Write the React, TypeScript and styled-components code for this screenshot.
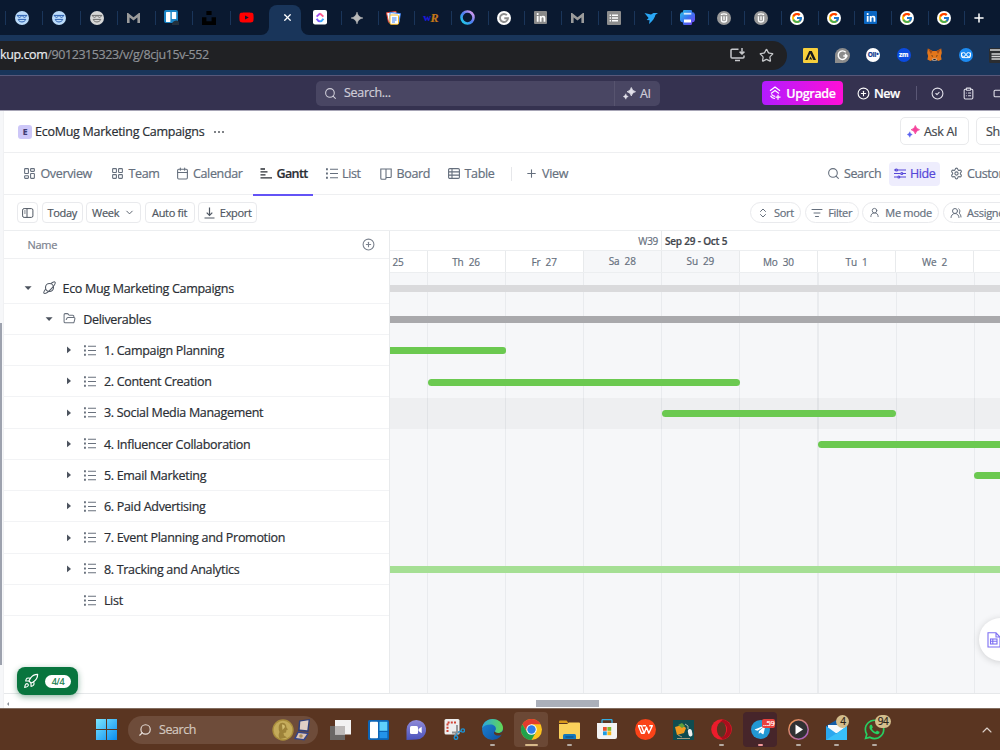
import type { ReactNode } from "react"
import styled, { createGlobalStyle, css } from "styled-components"
import {
    Calendar, ChevronDown, ChevronUp, ChevronsUpDown, CircleCheck, CirclePlus, ClipboardList, FolderOpen,
    LayoutDashboard, LayoutGrid, ListFilter, Plus, Rocket, Search, Settings, Star, Table2, UserRound, UsersRound, Video, X,
} from "lucide-react"
import { FcGoogle } from "react-icons/fc"
import { FaLinkedinIn, FaTelegramPlane, FaWhatsapp, FaYoutube } from "react-icons/fa"

/** Types */

interface GanttRow {
    label: string
    level: number
    kind: 'space' | 'folder' | 'list'
    arrow?: 'down' | 'right'
    color?: string
    start?: number
    end?: number
    hovered?: boolean
}

/** Data */

const DAY = 78.1
const FIRST_LINE = 37.5

const rows: GanttRow[] = [
    { label: 'Eco Mug Marketing Campaigns', level: 0, kind: 'space', arrow: 'down', color: '#dadadc', start: -2, end: 12 },
    { label: 'Deliverables', level: 1, kind: 'folder', arrow: 'down', color: '#a9a9ac', start: -2, end: 12 },
    { label: '1. Campaign Planning', level: 2, kind: 'list', arrow: 'right', color: '#6bc950', start: -2, end: 1 },
    { label: '2. Content Creation', level: 2, kind: 'list', arrow: 'right', color: '#6bc950', start: 0, end: 4 },
    { label: '3. Social Media Management', level: 2, kind: 'list', arrow: 'right', color: '#6bc950', start: 3, end: 6, hovered: true },
    { label: '4. Influencer Collaboration', level: 2, kind: 'list', arrow: 'right', color: '#6bc950', start: 5, end: 12 },
    { label: '5. Email Marketing', level: 2, kind: 'list', arrow: 'right', color: '#6bc950', start: 7, end: 12 },
    { label: '6. Paid Advertising', level: 2, kind: 'list', arrow: 'right' },
    { label: '7. Event Planning and Promotion', level: 2, kind: 'list', arrow: 'right' },
    { label: '8. Tracking and Analytics', level: 2, kind: 'list', arrow: 'right', color: '#a5df94', start: -2, end: 12 },
    { label: 'List', level: 2, kind: 'list' },
]

const days = ['Th  26', 'Fr  27', 'Sa  28', 'Su  29', 'Mo  30', 'Tu  1', 'We  2', '']

/** Icons */

const Smiley = ({ bg, fg }: { bg: string, fg: string }) => (
    <svg width="14" height="14" viewBox="0 0 14 14" fill="none" stroke={fg} strokeWidth="1">
        <circle cx="7" cy="7" r="7" fill={bg} stroke="none" />
        <path d="M1.8 4.4h10.4M2.8 4.6c0 2.4 3.4 2.4 3.4 0M7.8 4.6c0 2.4 3.4 2.4 3.4 0M3.2 8.4c1 3.4 6.4 3.4 7.6 0z" />
    </svg>
)

const Mail = () => (
    <svg width="13" height="10" viewBox="0 0 13 10" fill="none" stroke="#9b9b9b" strokeWidth="2.6">
        <path d="M1.3 10V1.8l5.2 4.1 5.2-4.1V10" />
    </svg>
)

const Trello = () => (
    <svg width="15" height="15" viewBox="0 0 15 15">
        <rect width="14" height="13" rx="2" fill="#1a84c4" />
        <rect x="2" y="2" width="4.4" height="10" rx="0.6" fill="#fff" />
        <rect x="7.8" y="2" width="4.4" height="7" rx="0.6" fill="#fff" />
        <path d="M8 15a4 4 0 0 1 7-3v3z" fill="#24303c" />
    </svg>
)

const Unsplash = () => (
    <svg width="14" height="14" viewBox="0 0 14 14"><path d="M4.4 0h5.2v4H4.4zM0 6.2h4.4v4h5.2v-4H14V14H0z" fill="#000" /></svg>
)

const ClickUp = () => (
    <svg width="14" height="15" viewBox="0 0 14 15" fill="none" strokeWidth="1.9">
        <rect width="14" height="14.5" rx="2" fill="#fff" />
        <path d="M3.6 6.6 7 3.5" stroke="#a24cf0" /><path d="M7 3.500l3.400 3.100" stroke="#ff5b8c" />
        <path d="M3.600 8.800Q5 11.400 7 11.400" stroke="#7a5cff" /><path d="M7 11.400q2 0 3.400-2.600" stroke="#3fa9ff" />
    </svg>
)

const Sparkle = () => (
    <svg width="12" height="12" viewBox="0 0 12 12"><path d="M6 0Q6.9 5.1 12 6 6.9 6.9 6 12 5.1 6.9 0 6 5.1 5.1 6 0z" fill="#b9b9b9" stroke="#b9b9b9" strokeWidth=".5" /></svg>
)

const Cards = () => (
    <svg width="15" height="14" viewBox="0 0 15 14">
        <path d="M.5 1.8 10 .4l1 9-8.5 1.8z" fill="#fff" stroke="#e3402f" />
        <path d="M4 1.5 14.4 2.6 13 11.5 4 10.5z" fill="#fff" stroke="#3b82f6" />
        <rect x="4" y="4" width="8.5" height="9.3" rx="1" fill="#fff" stroke="#f5b82a" />
        <path d="M6 7h4.5M6 9h4.5M6 11h3" stroke="#3b82f6" />
    </svg>
)

const Ring = () => (
    <svg width="15" height="15" viewBox="0 0 15 15" fill="none" strokeWidth="2.6">
        <defs><linearGradient id="ring" x1="0" y1="1" x2="1" y2="0"><stop stopColor="#19d8e8" /><stop offset=".5" stopColor="#4d7bf0" /><stop offset="1" stopColor="#f0a0f0" /></linearGradient></defs>
        <circle cx="7.5" cy="7.5" r="6" stroke="url(#ring)" />
    </svg>
)

const FormIcon = () => (
    <svg width="14" height="14" viewBox="0 0 14 14">
        <rect width="14" height="14" rx="1" fill="#8d8d8d" />
        <path d="M5 4.3h6M5 7h6M5 9.7h6M2.6 4.3H4M2.6 7H4M2.6 9.7H4" stroke="#fff" strokeWidth="1.4" />
    </svg>
)

const DarkCard = () => (
    <svg width="15" height="15" viewBox="0 0 15 15">
        <rect width="15" height="15" rx="1.5" fill="#2b2d30" />
        <path d="M1 2h13M2.5 6H14M2.5 8.5H14M2.5 11H14" stroke="#d5d5d5" strokeWidth="1.3" />
    </svg>
)

const Bird = () => (
    <svg width="14" height="12" viewBox="0 0 14 12"><path d="M.5 1 7 2.5 9.5 1H14l-2.5 1.8C10.8 6 8.6 9 5 12l.6-3.8L2.6 8l2-2z" fill="#2aa7f5" /></svg>
)

const PrintIcon = () => (
    <svg width="15" height="15" viewBox="0 0 15 15">
        <defs><linearGradient id="prt" x1="0" y1="0" x2="1" y2="1"><stop stopColor="#2bc7e8" /><stop offset=".5" stopColor="#3975f0" /><stop offset="1" stopColor="#7b3ff0" /></linearGradient></defs>
        <path d="M3.5 0h8l1 2.500H14l1 2v5.500l-1 2h-1.500l-1 3h-8l-1-3H1l-1-2V4.500l1-2h1.500z" fill="url(#prt)" />
        <rect x="3.8" y="2.8" width="7.5" height="1.8" fill="#fff" opacity=".8" /><rect x="4" y="9.5" width="7" height="3" fill="#fff" />
    </svg>
)

const Upwork = () => (
    <svg width="14" height="14" viewBox="0 0 14 14" fill="none" stroke="#fff" strokeWidth="1.3">
        <circle cx="7" cy="7" r="7" fill="#9a9a9a" stroke="none" />
        <path d="M4.4 5.300V9q0 2 2.600 2t2.600-2V5.300M3.900 3.700q3.100-1.600 6.200 0M7 5.300v4" />
    </svg>
)

const GanttIcon = () => (
    <svg width="12" height="11" viewBox="0 0 12 11" fill="none" stroke="currentColor" strokeWidth="1.3">
        <path d="M.5 1H5M.5 3.9h7M.5 6.9h5M.5 9.9H12" />
    </svg>
)

const ListIcon = () => (
    <svg width="12" height="11" viewBox="0 0 12 11" fill="none" stroke="currentColor" strokeWidth="1.1">
        <path d="M4 1.3h8M4 5.5h8M4 9.7h8" /><path d="M0 1.3h1.9M0 5.5h1.9M0 9.7h1.9" strokeWidth="1.9" />
    </svg>
)

const BoardIcon = () => (
    <svg width="12" height="12" viewBox="0 0 12 12" fill="none" stroke="currentColor" strokeWidth="1.1">
        <path d="M.8 1h10.4v7.5q0 1-1 1H6V10.3q0 1-1 1H1.8q-1 0-1-1zM6 1v9" />
    </svg>
)

const TableIcon = () => (
    <svg width="12" height="11" viewBox="0 0 12 11" fill="none" stroke="currentColor" strokeWidth="1.1">
        <rect x=".6" y=".6" width="10.8" height="9.8" rx="1.2" /><path d="M.6 3.900h10.800M.6 7.100h10.800M4 .6v9.800" />
    </svg>
)

const PanelIcon = () => (
    <svg width="12" height="10" viewBox="0 0 12 10" fill="none" stroke="currentColor">
        <rect x=".6" y=".6" width="10.3" height="8.8" rx="1.5" /><path d="M5 .6v8.8M2.2 3h1.4M2.2 5h1.4" />
    </svg>
)

const ExportIcon = () => (
    <svg width="11" height="12" viewBox="0 0 11 12" fill="none" stroke="currentColor" strokeWidth="1.2"><path d="M5.5.5v7.8M2.7 5.6l2.8 2.8 2.8-2.8M.5 11h10" /></svg>
)

const HideIcon = () => (
    <svg width="12" height="11" viewBox="0 0 12 11" fill="none" stroke="currentColor" strokeWidth="1.2">
        <path d="M0 2h2M4 2h8M0 5.5h6.5M8.5 5.5H12M0 9h3.5M5.5 9H12" /><circle cx="2.5" cy="2" r="1" /><circle cx="7.8" cy="5.5" r="1" /><circle cx="4.8" cy="9" r="1" />
    </svg>
)

const PlanetIcon = () => (
    <svg width="13" height="13" viewBox="0 0 13 13" fill="none" stroke="#525a66" strokeWidth="1.1">
        <circle cx="6.5" cy="6.5" r="4" />
        <path d="M2.7 8C.9 10.3.4 11.7 1 12.2c1 .8 4-1.1 6.7-3.9C10.6 5.3 12.8 2 12 1.1 11.5.5 9.9 1.1 8 2.5" />
    </svg>
)

const TwinSparkles = ({ big, small }: { big: string, small: string }) => (
    <svg width="13" height="13" viewBox="0 0 13 13">
        <path d="M8.3.5q.8 3.6 4.2 4.2Q9 5.4 8.3 8.9 7.6 5.4 4.1 4.7 7.6 4 8.3.5z" fill={big} stroke={big} strokeWidth=".8" />
        <path d="M2.8 6.7q.5 2.4 2.5 2.8-2.1.5-2.5 2.8Q2.3 10 .2 9.5q2.1-.5 2.6-2.8z" fill={small} stroke={small} strokeWidth=".4" />
    </svg>
)

const Triangle = ({ dir }: { dir: 'down' | 'right' }) => (
    <svg width="8" height="8" viewBox="0 0 8 8"><path d={dir === 'down' ? 'M.6 2.2h7L4.1 6z' : 'M2 .6v6.6L6 3.9z'} fill="#4c535e" /></svg>
)

const UpgradeIcon = () => (
    <svg width="12" height="14" viewBox="0 0 12 14" fill="none" stroke="#fff" strokeWidth="1.2">
        <path d="M1 4.8 6 1l5 3.8M2 7.5 6 4.6l4 2.9M1.5 9.8q1.5 2.7 4.5 2.7M2.5 8.4Q4 10.3 6 10.3M9 8.7v5M6.5 11.2h5" />
    </svg>
)

const InstallIcon = () => (
    <svg width="16" height="14" viewBox="0 0 16 14" fill="none" stroke="#c6c8cb" strokeWidth="1.5">
        <path d="M8.5 1.2H2q-1 0-1 1V9q0 1 1 1h11q1 0 1-1V7.5M5 12.5h5M12 0v5.8M9.6 3.6 12 6l2.4-2.4" />
    </svg>
)

const GreyG = () => (
    <svg width="14" height="14" viewBox="0 0 14 14" fill="none" stroke="#8f8f8f" strokeWidth="1.9">
        <circle cx="7" cy="7" r="7" fill="#fff" stroke="none" /><path d="M9.9 4.2A4 4 0 1 0 11 7.2H7.3" />
    </svg>
)

const Grammarly = () => (
    <svg width="15" height="15" viewBox="0 0 15 15" fill="none" stroke="#fff" strokeWidth="1.4">
        <path d="M0 15V7.5a7.5 7.5 0 1 1 7.5 7.5z" fill="#8c8c8c" stroke="none" /><path d="M10.7 4.3A4.3 4.3 0 1 0 11.7 8H8.3M10 6l2 2-2 2" />
    </svg>
)

const Fox = () => (
    <svg width="15" height="14" viewBox="0 0 15 14">
        <path d="M.8.5 5.5 3h4L14.2.5 14.8 5l-.9 3 .7 3.5-3 1.5-2-1h-4.2l-2 1-3-1.5.7-3.5-.9-3z" fill="#e2761b" />
        <path d="M.8.5 5.5 3 4 6zM14.2.5 9.5 3 11 6z" fill="#a5501a" /><path d="M5.3 10.5h4.4v2.2H5.3z" fill="#c9b5a5" />
        <path d="M4 7.5l2 .3-.5 1zM11 7.5l-2 .3.5 1zM6.3 11h2.4v1H6.3z" fill="#222" />
    </svg>
)

const Owl = () => (
    <svg width="14" height="14" viewBox="0 0 14 14" fill="none" stroke="#fff">
        <circle cx="7" cy="7" r="7" fill="#1d8bf1" stroke="none" /><circle cx="4.5" cy="6.6" r="2" /><circle cx="9.5" cy="6.6" r="2" /><path d="M2.5 4.6v4q0 1 1.5 1h6q1.5 0 1.5-1v-4" />
    </svg>
)

const Apollo = () => (
    <svg width="15" height="15" viewBox="0 0 15 15"><rect width="15" height="15" rx="1" fill="#f7cf3c" /><path d="M6.2 3h2.600l4.200 9h-2.600L7.200 5.600 4.600 12H2.200zM4.600 12q2.400-.6 3-3.400l1.800 3.400q-2-1.500-4.800 0z" fill="#16181c" /></svg>
)

const WindowsLogo = () => (
    <svg width="21" height="21" viewBox="0 0 21 21">
        <defs><linearGradient id="win" x1="0" y1="0" x2="1" y2="1"><stop stopColor="#7be6ff" /><stop offset="1" stopColor="#0a8cf0" /></linearGradient></defs>
        <path d="M0 0h10v10H0zM11 0h10v10H11zM0 11h10v10H0zM11 11h10v10H11z" fill="url(#win)" />
    </svg>
)

const Medal = () => (
    <svg width="40" height="22" viewBox="0 0 40 22">
        <circle cx="11" cy="11" r="10.7" fill="#a98d3c" /><circle cx="11" cy="11" r="9.3" fill="#c4ab5a" />
        <path d="M8 4.500q4-2 6 1.500l.5 2.500 1.500 2-1.500.5-.5 2.500-2.500.5.500 2.500 3 2-7 1.500q-2.500-3-.5-7-2-5 .5-8.500z" fill="#9d8239" /><path d="M10 5.500q3-.5 3 2.500l-2.500 3z" fill="#d2bd70" />
        <path d="M27 1.5 38 0l-1.5 13L26 12z" fill="#2f3f7a" /><path d="M28.3 2.5 36.5 1.300 35.300 11.200l-7.500-.7z" fill="#e0cfc6" />
        <path d="M25.5 12.500 37 14l-4.500 7.5L22 20z" fill="#33458c" /><path d="M26.5 14l8.500 1-3.500 5-7.500-1z" fill="#ddc5b8" /><circle cx="29" cy="17" r="1.8" fill="#a98d5c" />
    </svg>
)

const TaskView = () => (
    <svg width="21" height="20" viewBox="0 0 21 20"><rect y="6" width="15" height="14" fill="#6a6765" /><rect x="5" width="16" height="14.5" fill="#f2f2f2" /><path d="M5 6h10v8.5H5z" fill="#bdbab9" /></svg>
)

const Widgets = () => (
    <svg width="21" height="20" viewBox="0 0 21 20">
        <rect width="21" height="20" rx="1.5" fill="#0c64b5" /><rect x="2" y="1.8" width="8" height="16.4" rx=".8" fill="#fff" />
        <rect x="11.5" y="1.8" width="7.8" height="9" fill="#5fd0fb" /><rect x="11.5" y="12" width="7.8" height="6.2" fill="#2393ea" />
    </svg>
)

const Chat = () => (
    <svg width="20" height="20" viewBox="0 0 20 20">
        <defs><linearGradient id="cht" x1="0" y1="0" x2="0" y2="1"><stop stopColor="#8f8ad8" /><stop offset="1" stopColor="#4b53bc" /></linearGradient></defs>
        <path d="M.5 20V9.8A9.8 9.8 0 1 1 10.3 19.6z" fill="url(#cht)" /><rect x="4" y="6" width="8" height="8" rx="1.5" fill="#fff" /><path d="M12.5 9 15.7 6.8v6.4L12.5 11z" fill="#fff" />
    </svg>
)

const Snip = () => (
    <svg width="21" height="21" viewBox="0 0 21 21" fill="none">
        <rect x=".5" width="15" height="15.5" rx="1.5" fill="#eee" /><path d="M3.500 13V3.500h9.500" stroke="#d04335" strokeWidth="2" strokeDasharray="2 1.2" />
        <path d="M13 6v6l-2 5M8 13.500h8" stroke="#8e9092" strokeWidth="1.8" />
        <circle cx="12" cy="18.6" r="1.8" stroke="#1b93d6" strokeWidth="1.3" /><circle cx="18.8" cy="11.5" r="1.7" stroke="#1b93d6" strokeWidth="1.3" />
        <path d="M12.500 16.800l.5-2.500M14 13.200l3.200-1" stroke="#1b93d6" strokeWidth="1.3" />
    </svg>
)

const Edge = () => (
    <svg width="21" height="21" viewBox="0 0 21 21">
        <defs>
            <linearGradient id="edg" x1="0" y1="0" x2="1" y2="0"><stop stopColor="#2aa6e0" /><stop offset="1" stopColor="#63d952" /></linearGradient>
            <linearGradient id="edb" x1="0" y1="0" x2="1" y2="1"><stop stopColor="#1c86d8" /><stop offset="1" stopColor="#0f4f9e" /></linearGradient>
        </defs>
        <circle cx="10.5" cy="10.5" r="10.5" fill="url(#edb)" />
        <path d="M0 9.5C.8 3.5 5.3 0 10.5 0 17 0 21 4.5 21 9c0 3.3-2.4 5-4.8 5-2.2 0-3.2-1-3.2-1.8 0-.7.9-1 .9-2.5C13.9 7.2 11.6 5.5 8.5 5.5 4.5 5.5 1.2 7 0 9.5z" fill="url(#edg)" />
        <path d="M12.500 12.500c-1.500 2 .5 4 3.500 4 1.600 0 3-.5 4-1.100l1 .6V12c-1.200 1.500-3 2-4.800 2-2.200 0-3.200-1-3.700-1.500z" fill="#5a3521" />
    </svg>
)

const Chrome = () => (
    <svg width="21" height="21" viewBox="0 0 21 21">
        <circle cx="10.5" cy="10.5" r="10.5" fill="#fcc31e" />
        <path d="M1.4 5.25A10.5 10.5 0 0 1 19.6 5.25H10.5L6 13z" fill="#e33b2e" />
        <path d="M1.4 5.25 6 13.1 15.1 13.1 10.5 21A10.5 10.5 0 0 1 1.4 5.25z" fill="#21a14b" />
        <circle cx="10.5" cy="10.5" r="5.2" fill="#fff" /><circle cx="10.5" cy="10.5" r="4.2" fill="#2f7de9" />
    </svg>
)

const Explorer = () => (
    <svg width="21" height="20" viewBox="0 0 21 20">
        <path d="M0 1.5Q0 .5 1 .5h6.5l2 2.5H0z" fill="#d99a1c" /><path d="M0 4h8l2-1.5h10q1 0 1 1V18q0 1-1 1H1q-1 0-1-1z" fill="#fbd15b" />
        <path d="M4 19v-3.5q0-1.5 1.5-1.5h10q1.5 0 1.5 1.5V19z" fill="#1477bd" /><path d="M6.5 17h8" stroke="#0c4f86" strokeWidth="1.2" />
    </svg>
)

const Store = () => (
    <svg width="20" height="21" viewBox="0 0 20 21">
        <path d="M5 5V1.5q0-1 1-1h8q1 0 1 1V5" fill="none" stroke="#35aee2" strokeWidth="1.3" /><path d="M0 4h20V18q0 2-2 2H2q-2 0-2-2z" fill="#f3f3f3" />
        <path d="M6 8h3.800v3.800H6z" fill="#e8502c" /><path d="M10.4 8h3.800v3.800h-3.800z" fill="#80b928" />
        <path d="M6 12.4h3.800v3.800H6z" fill="#1f9de3" /><path d="M10.4 12.4h3.800v3.800h-3.800z" fill="#f8b616" />
    </svg>
)

const Wps = () => (
    <svg width="21" height="21" viewBox="0 0 21 21">
        <circle cx="10.5" cy="10.5" r="10.5" fill="#fa4318" />
        <path d="M3 6.700h3.300l2.900 7.500 2.300-6 2.300 6L17.300 6.700h-3M7.500 6.700h3.500M9.200 14.200H6.500L3.500 7" fill="none" stroke="#fff" strokeWidth="1.400" strokeLinejoin="round" />
    </svg>
)

const BirdApp = () => (
    <svg width="21" height="20" viewBox="0 0 21 20">
        <rect width="21" height="20" fill="#0f4c50" /><path d="M2 7l7-2 4 3-2 5-7 2z" fill="#f29a1f" /><path d="M5 5l4-2 3 3-3 2z" fill="#5e9e3b" />
        <path d="M12 4l3 2v3" stroke="#a8b8a8" fill="none" /><rect x="15" y="9" width="4" height="7.5" rx="2" fill="#eee" transform="rotate(-12 17 12)" />
        <path d="M5 15l4 2M4 18.5h13" stroke="#c9b08a" strokeWidth=".8" />
    </svg>
)

const Opera = () => (
    <svg width="21" height="21" viewBox="0 0 21 21">
        <circle cx="10.5" cy="10.5" r="10.3" fill="#ec1c2b" /><path d="M12 .4a10.300 10.300 0 0 1 0 20.200L9 18q7-1 7-7.500T9 3z" fill="#a90e1c" />
        <ellipse cx="10.5" cy="10.5" rx="4.6" ry="7.6" fill="#5a3521" />
    </svg>
)

const Player = () => (
    <svg width="21" height="21" viewBox="0 0 21 21">
        <defs><linearGradient id="ply" x1="0" y1="0" x2="1" y2="1"><stop stopColor="#f39a48" /><stop offset="1" stopColor="#9d58c9" /></linearGradient></defs>
        <circle cx="10.5" cy="10.5" r="9.7" fill="#303133" stroke="url(#ply)" strokeWidth="1.5" /><path d="M7.5 5.5v10L15 10.5z" fill="#fff" />
    </svg>
)

const Outlook = () => (
    <svg width="21" height="20" viewBox="0 0 21 20">
        <path d="M0 6 10.5 0 21 6v6H0z" fill="#0f5ba8" /><path d="M2 5h17v8H2z" fill="#f4f8fc" />
        <path d="M0 6l10.5 7.5L21 6v14H0z" fill="#2ba7ee" /><path d="M0 20 13 11.8 21 6v14z" fill="#38bff8" />
    </svg>
)

const DocIcon = () => (
    <svg width="14" height="16" viewBox="0 0 14 16" fill="none" stroke="#7d6ff2" strokeWidth="1.1"><path d="M1 .8h8L13 5v10H1zM9 .8V5h4" /><rect x="3.5" y="7" width="6.5" height="5" /><path d="M3.5 9.2H10M5.8 7v5" /></svg>
)

/** Component */

const Google = () => <Disc><FcGoogle size={12} /></Disc>

const LinkedIn = ({ color }: { color: string }) => <Chip $bg={color} $s={13}><FaLinkedinIn size={10} /></Chip>

const BrowserChrome = () => {
    const favicons: ReactNode[] = [
        <Smiley bg="#bcdcfa" fg="#2b5fb0" />, <Smiley bg="#bcdcfa" fg="#2b5fb0" />, <Smiley bg="#d7d7d7" fg="#6f6f6f" />,
        <Mail />, <Trello />, <Unsplash />, <FaYoutube size={15} color="#f00" />,
    ]
    const moreFavicons: ReactNode[] = [
        <Sparkle />, <Cards />, <Writer><b>w</b><i>R</i></Writer>, <Ring />, <GreyG />, <LinkedIn color="#8a8a8a" />,
        <Mail />, <FormIcon />, <Bird />, <PrintIcon />, <Upwork />, <Upwork />,
        <Google />, <Google />, <LinkedIn color="#0a66c2" />, <Google />, <Google />,
    ]

    return (
        <>
            <TabStrip>
                {favicons.map((icon, i) => <BrowserTab key={i} $w={37.43}>{icon}</BrowserTab>)}
                <ActiveTab><X size={11} strokeWidth={2.8} /></ActiveTab>
                <BrowserTab $w={36} $plain><ClickUp /></BrowserTab>
                {moreFavicons.map((icon, i) => <BrowserTab key={i} $w={36.68}>{icon}</BrowserTab>)}
                <BrowserTab $w={34}><Plus size={14} color="#fff" strokeWidth={2.6} /></BrowserTab>
            </TabStrip>
            <AddressRow>
                <AddressBar>
                    <Url><span>kup.com</span>/9012315323/v/g/8cju15v-552</Url>
                    <InstallIcon />
                    <Star size={15} color="#c6c8cb" strokeWidth={2} />
                </AddressBar>
                <Extensions>
                    <Apollo /><Grammarly />
                    <Chip $bg="#fff" $s={14} $round $color="#123c92">OII•</Chip>
                    <Chip $bg="#0b4be0" $s={14} $round>zm</Chip>
                    <Fox /><Owl /><DarkCard />
                </Extensions>
            </AddressRow>
        </>
    )
}

const AppBar = () => (
    <TopBar>
        <SearchBox>
            <Search size={13} /><span>Search...</span>
            <AiButton><TwinSparkles big="#e2e1ea" small="#e2e1ea" />AI</AiButton>
        </SearchBox>
        <Upgrade><UpgradeIcon />Upgrade</Upgrade>
        <NewButton><CirclePlus size={13} />New</NewButton>
        <TopIcons><CircleCheck size={13} /><ClipboardList size={13} /><Video size={13} /></TopIcons>
    </TopBar>
)

const Sidebar = () => (
    <NameColumn>
        <NameHeader>Name<CirclePlus size={13} strokeWidth={2} /></NameHeader>
        {rows.map((row, i) => (
            <NameRow key={row.label} $level={row.level} $first={i === 0}>
                <Toggle>{row.arrow && <Triangle dir={row.arrow} />}</Toggle>
                <RowIcon>
                    {row.kind === 'space' && <PlanetIcon />}
                    {row.kind === 'folder' && <FolderOpen size={13} strokeWidth={1.9} />}
                    {row.kind === 'list' && <ListIcon />}
                </RowIcon>
                {row.label}
            </NameRow>
        ))}
    </NameColumn>
)

const Timeline = () => (
    <TimelineArea>
        <WeekHeader><Week>W39</Week><Week $strong>Sep 29 - Oct 5</Week></WeekHeader>
        <DayHeader>
            <Day $w={FIRST_LINE} $cut>25</Day>
            {days.map((day, i) => <Day key={i} $w={DAY} $off={i === 2 || i === 3}>{day}</Day>)}
        </DayHeader>
        <Grid>
            {rows.map(row => {
                const left = Math.max(0, FIRST_LINE + (row.start ?? 0) * DAY)
                const right = Math.min(620, FIRST_LINE + (row.end ?? 0) * DAY)
                return (
                    <BarRow key={row.label} $hovered={row.hovered}>
                        {row.color && <Bar $color={row.color} $open={left === 0} style={{ marginLeft: left, width: right - left }} />}
                    </BarRow>
                )
            })}
        </Grid>
    </TimelineArea>
)

const Taskbar = () => (
    <TaskbarStrip>
        <WindowsLogo />
        <TaskSearch><Search size={14} /><span>Search</span><Medal /></TaskSearch>
        <TaskItem><TaskView /></TaskItem>
        <TaskItem><Widgets /></TaskItem>
        <TaskItem><Chat /></TaskItem>
        <TaskItem><Snip /></TaskItem>
        <TaskItem $dot="#b5aaa2"><Edge /></TaskItem>
        <TaskItem $dot="#d8b98a" $wide $bg="#6b4835"><Chrome /></TaskItem>
        <TaskItem $dot="#b5aaa2"><Explorer /></TaskItem>
        <TaskItem><Store /></TaskItem>
        <TaskItem><Wps /></TaskItem>
        <TaskItem><BirdApp /></TaskItem>
        <TaskItem $dot="#b5aaa2"><Opera /></TaskItem>
        <TaskItem $dot="#f49a9c" $bg="#46252a">
            <Chip $bg="#2298d3" $s={19} $round><FaTelegramPlane size={12} /></Chip>
            <Badge $red>..59</Badge>
        </TaskItem>
        <TaskItem $dot="#b5aaa2"><Player /></TaskItem>
        <TaskItem $dot="#b5aaa2"><Outlook /><Badge>4</Badge></TaskItem>
        <TaskItem $dot="#b5aaa2"><FaWhatsapp size={23} color="#27cf62" /><Badge>94</Badge></TaskItem>
        <Tray><ChevronUp size={16} strokeWidth={1.6} /></Tray>
    </TaskbarStrip>
)

const App = () => (
    <Screen>
        <GlobalStyle />
        <BrowserChrome />
        <AppBar />
        <Workspace>
            <Rail><RailThumb /></Rail>
            <Main>
                <TitleRow>
                    <SpaceBadge>E</SpaceBadge>
                    <Title>EcoMug Marketing Campaigns</Title>
                    <Dots><i /><i /><i /></Dots>
                    <TitleActions>
                        <OutlineButton $w={69}><TwinSparkles big="#f5439b" small="#5b62f0" />Ask AI</OutlineButton>
                        <OutlineButton $w={60}>Share</OutlineButton>
                    </TitleActions>
                </TitleRow>
                <ViewRow>
                    <ViewTab $w={88}><LayoutDashboard size={13} />Overview</ViewTab>
                    <ViewTab $w={64.5}><LayoutGrid size={13} />Team</ViewTab>
                    <ViewTab $w={84.5}><Calendar size={13} />Calendar</ViewTab>
                    <ViewTab $w={60} $active><GanttIcon />Gantt</ViewTab>
                    <ViewTab $w={54.5} $gap={5.5}><ListIcon />List</ViewTab>
                    <ViewTab $w={68}><BoardIcon />Board</ViewTab>
                    <ViewTab $w={70}><TableIcon />Table</ViewTab>
                    <AddView><Plus size={13} />View</AddView>
                    <ViewTools>
                        <Tool $w={54}><Search size={13} />Search</Tool>
                        <Tool $w={51} $active><HideIcon />Hide</Tool>
                        <Tool $w={80}><Settings size={13} />Customize</Tool>
                    </ViewTools>
                </ViewRow>
                <ControlRow>
                    <Control $w={21}><PanelIcon /></Control>
                    <Control $w={41}>Today</Control>
                    <Control $w={54.5}>Week<ChevronDown size={11} /></Control>
                    <Control $w={50}>Auto fit</Control>
                    <Control $w={59}><ExportIcon />Export</Control>
                    <Filters>
                        <Control $w={51} $pill><ChevronsUpDown size={12} />Sort</Control>
                        <Control $w={54} $pill><ListFilter size={12} />Filter</Control>
                        <Control $w={76.5} $pill><UserRound size={11} />Me mode</Control>
                        <Control $w={75} $pill><UsersRound size={12} />Assignee</Control>
                    </Filters>
                </ControlRow>
                <GanttBody>
                    <Sidebar />
                    <Timeline />
                </GanttBody>
                <ScrollTrack><ScrollArrow /><ScrollThumb /></ScrollTrack>
            </Main>
            <Progress><Rocket size={16} strokeWidth={1.7} /><span>4/4</span></Progress>
            <DocButton><DocIcon /></DocButton>
        </Workspace>
        <Taskbar />
    </Screen>
)

/** Styles */

const GlobalStyle = createGlobalStyle`
    * {
        box-sizing: border-box;
    }

    body {
        margin: 0;
        overflow: hidden;
    }

    svg {
        display: block;
        flex-shrink: 0;
    }
`

// drops the label 1px below the optical centre while the icon stays put
const lowLabel = css`
    padding-top: 2px;
    & > svg {
        margin-top: -2px;
    }
`

const Screen = styled.div`
    display: flex;
    flex-direction: column;
    width: 1000px;
    height: 750px;
    overflow: hidden;
    background: #fff;
    font-family: "Open Sans", "Noto Sans", sans-serif;
    font-size: 12.5px;
    letter-spacing: -0.3px;
    line-height: 1;
    white-space: nowrap;
    -webkit-text-stroke: 0.2px;
`

const TabStrip = styled.div`
    display: flex;
    align-items: center;
    height: 35px;
    padding-left: 5px;
    flex-shrink: 0;
    background: #0a1930;
`

const BrowserTab = styled.div<{ $w: number, $plain?: boolean }>`
    display: flex;
    align-items: center;
    justify-content: center;
    width: ${props => props.$w}px;
    height: 14px;
    padding-right: ${props => props.$plain ? 6 : 5}px;
    flex-shrink: 0;
    border-left: 1.5px solid ${props => props.$plain ? 'transparent' : '#1a355a'};
`

const ActiveTab = styled.div`
    display: flex;
    align-items: center;
    justify-content: flex-end;
    position: relative;
    width: 32px;
    height: 30px;
    margin: 5px 4px 0 2px;
    padding: 0 8px 5px 0;
    flex-shrink: 0;
    border-radius: 8px 8px 0 0;
    background: #19355a;
    color: #fff;
    &::before, &::after {
        position: absolute;
        bottom: 0;
        width: 8px;
        height: 8px;
        clip-path: inset(0);
        content: '';
    }
    &::before {
        left: -8px;
        border-bottom-right-radius: 8px;
        box-shadow: 4px 4px 0 4px #19355a;
    }
    &::after {
        right: -8px;
        border-bottom-left-radius: 8px;
        box-shadow: -4px 4px 0 4px #19355a;
    }
`

const Writer = styled.span`
    display: flex;
    align-items: center;
    font-family: "Liberation Serif", serif;
    font-size: 12px;
    letter-spacing: -0.5px;
    b { color: #1d18dd; font-size: 11px; }
    i { color: #c47718; font-weight: bold; }
`

const Chip = styled.span<{ $bg: string, $s: number, $round?: boolean, $color?: string }>`
    display: flex;
    align-items: center;
    justify-content: center;
    width: ${props => props.$s}px;
    height: ${props => props.$s}px;
    border-radius: ${props => props.$round ? '50%' : '1px'};
    background: ${props => props.$bg};
    color: ${props => props.$color ?? '#fff'};
    font-size: 6.5px;
    font-weight: 700;
`

const Disc = styled.span`
    display: flex;
    align-items: center;
    justify-content: center;
    width: 14px;
    height: 14px;
    border-radius: 50%;
    background: #fff;
`

const AddressRow = styled.div`
    display: flex;
    align-items: center;
    height: 40px;
    flex-shrink: 0;
    background: #19355a;
`

const AddressBar = styled.div`
    display: flex;
    align-items: center;
    gap: 13px;
    width: 787px;
    height: 29px;
    padding-right: 13px;
    flex-shrink: 0;
    border-radius: 0 15px 15px 0;
    background: #202124;
`

const Url = styled.div`
    flex: 1;
    padding-top: 1px;
    color: #8f9297;
    font-size: 12.5px;
    letter-spacing: -0.42px;
    span { color: #e8eaed; }
`

const Extensions = styled.div`
    display: flex;
    align-items: center;
    gap: 16.5px;
    padding-left: 16px;
`

const TopBar = styled.div`
    display: flex;
    align-items: center;
    height: 36px;
    padding-left: 316px;
    flex-shrink: 0;
    border-top: 1px solid #57587a;
    border-bottom: 1px solid #a7a5b6;
    background: #353250;
    color: #e2e1ea;
`

const SearchBox = styled.div`
    display: flex;
    align-items: center;
    gap: 7px;
    width: 344px;
    height: 25px;
    padding-left: 8px;
    flex-shrink: 0;
    border-radius: 5px;
    background: #494663;
    color: #cfcdd8;
    span { padding-top: 1px; }
`

const AiButton = styled.div`
    display: flex;
    align-items: center;
    gap: 4px;
    width: 46px;
    height: 25px;
    margin-left: auto;
    padding-left: 8px;
    border-left: 1px solid #57546f;
    ${lowLabel}
`

const Upgrade = styled.div`
    display: flex;
    align-items: center;
    justify-content: center;
    gap: 5px;
    width: 81px;
    height: 24px;
    margin-left: 102px;
    flex-shrink: 0;
    border-radius: 4px;
    background: linear-gradient(90deg, #b31bff, #ff0fd6);
    color: #fff;
    font-weight: 600;
    ${lowLabel}
`

const NewButton = styled.div`
    display: flex;
    align-items: center;
    gap: 4px;
    width: 74px;
    height: 14px;
    padding-left: 14px;
    flex-shrink: 0;
    border-right: 1px solid #5a5775;
    color: #fff;
    font-weight: 600;
    letter-spacing: -0.5px;
    ${lowLabel}
`

const TopIcons = styled.div`
    display: flex;
    gap: 18px;
    padding-left: 14px;
`

const Workspace = styled.div`
    display: flex;
    position: relative;
    height: 597px;
    flex-shrink: 0;
`

const Rail = styled.div`
    width: 4px;
    padding-top: 212px;
    background: #f6f7f9;
    border-right: 1px solid #f0f1f3;
`

const RailThumb = styled.div`
    width: 1.5px;
    height: 342px;
    background: #9da2ae;
`

const Main = styled.div`
    display: flex;
    flex-direction: column;
    width: 996px;
    overflow: hidden;
    color: #656f7d;
`

const TitleRow = styled.div`
    display: flex;
    align-items: center;
    height: 42px;
    padding-left: 14px;
    flex-shrink: 0;
    border-bottom: 1px solid #eeeff1;
`

const SpaceBadge = styled.div`
    width: 14px;
    height: 14px;
    border-radius: 3px;
    background: #cdc7f8;
    color: #3f3a70;
    font-size: 8.5px;
    font-weight: 700;
    line-height: 14px;
    text-align: center;
`

const Title = styled.div`
    width: 170px;
    margin-left: 3px;
    padding-top: 2px;
    color: #2a2e34;
    font-weight: 500;
    letter-spacing: -0.26px;
`

const Dots = styled.div`
    display: flex;
    gap: 2px;
    margin-left: 9px;
    i {
        width: 2px;
        height: 2px;
        border-radius: 50%;
        background: #54595f;
    }
`

const TitleActions = styled.div`
    display: flex;
    gap: 7px;
    width: 100px;
    margin: -1px 0 0 auto;
`

const OutlineButton = styled.div<{ $w: number }>`
    display: flex;
    align-items: center;
    gap: 4px;
    width: ${props => props.$w}px;
    height: 28px;
    padding-left: ${props => props.$w === 69 ? 6 : 9}px;
    flex-shrink: 0;
    border: 1px solid #e9eaec;
    border-radius: 5px;
    color: #43474d;
    font-weight: 500;
    ${lowLabel}
`

const ViewRow = styled.div`
    display: flex;
    align-items: center;
    height: 42px;
    padding-left: 12px;
    flex-shrink: 0;
    border-bottom: 1px solid #eeeff1;
`

const ViewTab = styled.div<{ $w: number, $active?: boolean, $gap?: number }>`
    display: flex;
    align-items: center;
    gap: 4.5px;
    width: ${props => props.$w}px;
    height: 44px;
    margin-left: ${props => props.$gap ?? 0}px;
    padding-left: 7px;
    flex-shrink: 0;
    border-bottom: 2px solid ${props => props.$active ? '#6353f6' : 'transparent'};
    border-top: 2px solid transparent;
    color: ${props => props.$active ? '#2a2e34' : '#656f7d'};
    font-weight: ${props => props.$active ? 600 : 500};
    letter-spacing: ${props => props.$active ? -0.6 : -0.35}px;
    ${lowLabel}
`

const AddView = styled.div`
    display: flex;
    align-items: center;
    gap: 4px;
    height: 14px;
    padding-left: 13px;
    border-left: 1px solid #e6e7ea;
    font-weight: 500;
    ${lowLabel}
`

const ViewTools = styled.div`
    display: flex;
    align-items: center;
    gap: 8px;
    width: 173px;
    margin-left: auto;
`

const Tool = styled.div<{ $w: number, $active?: boolean }>`
    display: flex;
    align-items: center;
    gap: 4px;
    width: ${props => props.$w}px;
    height: 24px;
    padding-left: ${props => props.$active ? 5 : 2}px;
    flex-shrink: 0;
    border-radius: 4px;
    background: ${props => props.$active ? '#eeedfd' : 'transparent'};
    color: ${props => props.$active ? '#5546d8' : '#656f7d'};
    font-weight: 500;
    letter-spacing: -0.4px;
    &:first-child { padding-left: 0; }
    ${lowLabel}
`

const ControlRow = styled.div`
    display: flex;
    align-items: center;
    gap: 3.7px;
    height: 36px;
    padding-left: 13px;
    flex-shrink: 0;
    border-bottom: 1px solid #eceef0;
`

const Control = styled.div<{ $w: number, $pill?: boolean }>`
    display: flex;
    align-items: center;
    justify-content: center;
    gap: 5px;
    width: ${props => props.$w}px;
    height: 21px;
    flex-shrink: 0;
    border: 1px solid #e9eaed;
    border-radius: ${props => props.$pill ? 11 : 4}px;
    color: ${props => props.$pill ? '#656f7d' : '#4f5762'};
    font-size: 11px;
    font-weight: 500;
`

const Filters = styled.div`
    display: flex;
    gap: 3.7px;
    width: 250px;
    margin-left: auto;
`

const GanttBody = styled.div`
    display: flex;
    height: 462px;
    flex-shrink: 0;
`

const NameColumn = styled.div`
    width: 385px;
    flex-shrink: 0;
`

const NameHeader = styled.div`
    display: flex;
    align-items: center;
    justify-content: space-between;
    height: 28px;
    padding: 0 14.5px 0 23.5px;
    border-bottom: 1px solid #eff0f2;
    color: #7b828e;
    font-size: 11px;
`

const NameRow = styled.div<{ $level: number, $first: boolean }>`
    display: flex;
    align-items: center;
    height: ${props => props.$first ? 44.7 : 31.25}px;
    padding-top: ${props => props.$first ? 16 : 2}px;
    padding-left: ${props => 18 + props.$level * 20.7}px;
    border-bottom: 1px solid #f2f3f5;
    color: #2a2e34;
    font-weight: 500;
`

const Toggle = styled.div`
    width: 20.5px;
    margin-top: -2px;
    padding-left: 2px;
`

const RowIcon = styled.div`
    width: 20px;
    margin-top: -2px;
    color: #69717d;
`

const TimelineArea = styled.div`
    width: 611px;
    border-left: 1px solid #e8eaec;
    overflow: hidden;
`

const WeekHeader = styled.div`
    display: flex;
    height: 20px;
    border-bottom: 1px solid #eceef0;
    font-size: 10px;
`

const Week = styled.div<{ $strong?: boolean }>`
    display: flex;
    align-items: center;
    justify-content: ${props => props.$strong ? 'flex-start' : 'flex-end'};
    width: 272px;
    padding: 0 3px;
    flex-grow: ${props => props.$strong ? 1 : 0};
    border-right: ${props => props.$strong ? 0 : 1}px solid #e8eaec;
    color: ${props => props.$strong ? '#42464d' : '#656f7d'};
    font-weight: ${props => props.$strong ? 600 : 500};
    letter-spacing: ${props => props.$strong ? -0.2 : -0.3}px;
`

const DayHeader = styled.div`
    display: flex;
    height: 21.7px;
    border-bottom: 1px solid #eceef0;
`

const Day = styled.div<{ $w: number, $off?: boolean, $cut?: boolean }>`
    display: flex;
    align-items: center;
    justify-content: ${props => props.$cut ? 'flex-start' : 'center'};
    width: ${props => props.$w}px;
    padding-top: ${props => props.$off ? 0 : 2}px;
    padding-left: ${props => props.$cut ? 2.5 : 0}px;
    flex-shrink: 0;
    border-right: 1px solid #e8eaec;
    background: ${props => props.$off ? '#f6f7f9' : '#fff'};
    color: #656f7d;
    font-size: 10px;
    font-weight: 500;
    letter-spacing: -0.1px;
    white-space: pre;
`

const Grid = styled.div`
    height: 420px;
    background: repeating-linear-gradient(90deg, #e9ebee 0, #e9ebee 1px, transparent 1px, transparent 78.1px) 37px 0 / 800px 100% no-repeat, #f6f7f9;
`

const BarRow = styled.div<{ $hovered?: boolean }>`
    display: flex;
    align-items: center;
    height: 31.25px;
    background: ${props => props.$hovered ? 'rgba(0, 0, 0, 0.03)' : 'transparent'};
`

const Bar = styled.div<{ $color: string, $open: boolean }>`
    height: 7px;
    flex-shrink: 0;
    border-radius: ${props => props.$open ? '0 3px 3px 0' : '3.5px'};
    background: ${props => props.$color};
`

const ScrollTrack = styled.div`
    display: flex;
    align-items: center;
    height: 15px;
    flex-shrink: 0;
    border-top: 1px solid #e6e8ea;
`

const ScrollArrow = styled.div`
    width: 0;
    height: 0;
    margin: 5px 0 0 3px;
    border: 2px solid transparent;
    border-left: 0;
    border-right-color: #8a8f98;
`

const ScrollThumb = styled.div`
    width: 63px;
    height: 7px;
    margin: 5px 0 0 527px;
    background: #abb0ba;
`

const Progress = styled.div`
    position: absolute;
    left: 17px;
    bottom: 13px;
    display: flex;
    align-items: center;
    gap: 6px;
    width: 61px;
    height: 28px;
    padding-left: 6px;
    border-radius: 8px;
    background: #08753e;
    box-shadow: 0 2px 6px rgba(8, 90, 50, 0.45);
    color: #fff;
    span {
        width: 26px;
        border-radius: 7px;
        background: #fff;
        color: #08753e;
        font-size: 9px;
        font-weight: 500;
        line-height: 13px;
        text-align: center;
    }
`

const DocButton = styled.div`
    position: absolute;
    left: 979px;
    top: 507px;
    display: flex;
    align-items: center;
    width: 43px;
    height: 43px;
    padding-left: 8px;
    border-radius: 50%;
    background: #fff;
    box-shadow: 0 1px 7px rgba(0, 0, 0, 0.16);
`

const TaskbarStrip = styled.div`
    display: flex;
    align-items: center;
    height: 42px;
    padding-left: 96px;
    flex-shrink: 0;
    border-top: 1px solid #826d60;
    background: #5a3521;
`

const TaskSearch = styled.div`
    display: flex;
    align-items: center;
    width: 190px;
    height: 28px;
    margin: 0 3px 0 11px;
    padding: 0 6px 0 10px;
    flex-shrink: 0;
    border-radius: 14px;
    background: #6e4c3a;
    color: #e5dcd6;
    svg:first-child { transform: scaleX(-1); }
    span { flex: 1; padding: 2px 0 0 7px; color: #d3c7bf; letter-spacing: -0.45px; }
`

const TaskItem = styled.div<{ $dot?: string, $wide?: boolean, $bg?: string }>`
    display: flex;
    align-items: center;
    justify-content: center;
    position: relative;
    width: 34.2px;
    height: 35px;
    margin: 0 2px;
    flex-shrink: 0;
    border-radius: 4px;
    background: ${props => props.$bg ?? 'transparent'};
    &::after {
        position: absolute;
        bottom: 1px;
        width: ${props => props.$wide ? 13 : 5}px;
        height: 2.5px;
        border-radius: 2px;
        background: ${props => props.$dot ?? 'transparent'};
        content: '';
    }
`

const Badge = styled.span<{ $red?: boolean }>`
    position: absolute;
    left: ${props => props.$red ? 19 : 17}px;
    top: ${props => props.$red ? 7 : 3}px;
    min-width: 13px;
    padding: 0 ${props => props.$red ? 1 : 3}px;
    border-radius: ${props => props.$red ? 2 : 7}px;
    background: ${props => props.$red ? '#e8413d' : '#d3bd8c'};
    color: ${props => props.$red ? '#fff' : '#2a2218'};
    font-size: ${props => props.$red ? 7.5 : 10}px;
    line-height: ${props => props.$red ? 9 : 13}px;
    text-align: center;
`

const Tray = styled.div`
    margin: 0 5px 0 auto;
    color: #ddd2cb;
`

/** Exports */

export default App
